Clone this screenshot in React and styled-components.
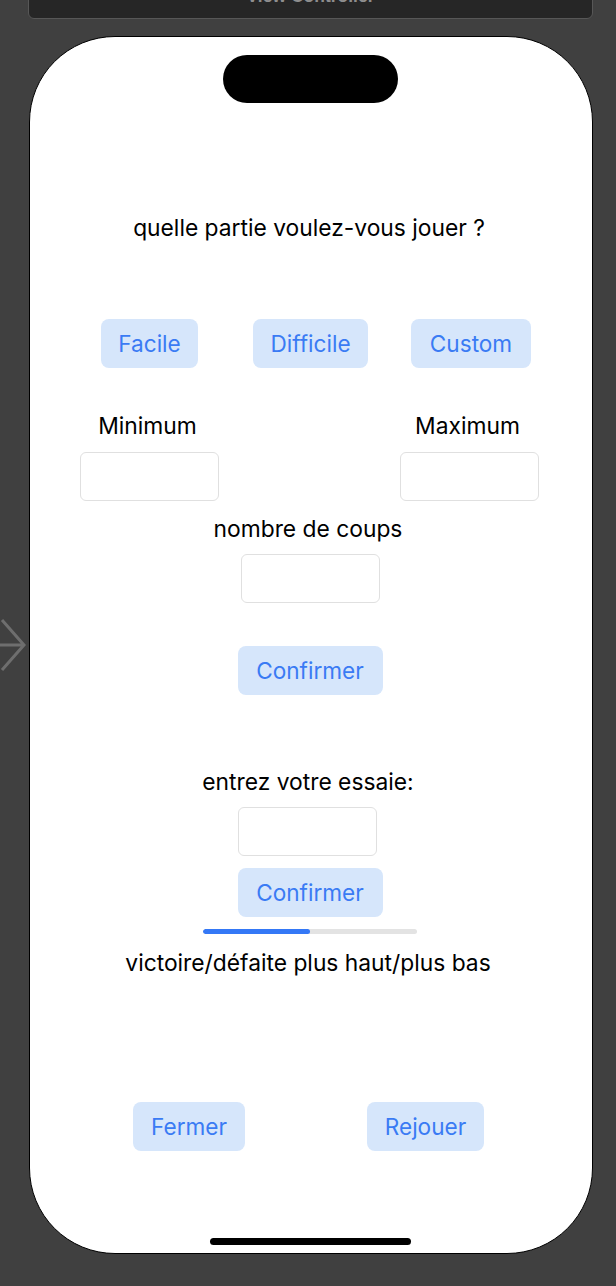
import React from 'react'
import styled, { createGlobalStyle } from 'styled-components'

const GlobalStyle = createGlobalStyle`
    html, body {
        margin: 0;
        padding: 0;
        background-color: #404040;
    }
    body {
        font-family: "Inter", "Liberation Sans", sans-serif;
    }
`

const App = () => {
    return <Canvas>
        <GlobalStyle/>
        <SceneBar>View Controller</SceneBar>
        <Stage>
            <EntryArrow width="29" height="56" viewBox="0 0 29 56">
                <path d="M-2 28 H24 M2 3 L24 28 L2 53" fill="none" stroke="#6e6e6e" strokeWidth="3"/>
            </EntryArrow>
            <Phone>
                <Island/>
                <Title>quelle partie voulez-vous jouer ?</Title>
                <ModeRow>
                    <PillButton width={97}>Facile</PillButton>
                    <PillButton width={115}>Difficile</PillButton>
                    <PillButton width={120}>Custom</PillButton>
                </ModeRow>
                <RangeRow>
                    <Field>
                        <Label>Minimum</Label>
                        <TextBox/>
                    </Field>
                    <Field>
                        <Label>Maximum</Label>
                        <TextBox/>
                    </Field>
                </RangeRow>
                <Label top={16}>nombre de coups</Label>
                <TextBox top={13}/>
                <PillButton width={145} top={43}>Confirmer</PillButton>
                <Label top={75}>entrez votre essaie:</Label>
                <TextBox top={13} shift={-3}/>
                <PillButton width={145} top={12}>Confirmer</PillButton>
                <Progress>
                    <ProgressFill style={{ width: '50%' }}/>
                </Progress>
                <Label top={17}>victoire/défaite plus haut/plus bas</Label>
                <BottomRow>
                    <PillButton width={112}>Fermer</PillButton>
                    <PillButton width={117}>Rejouer</PillButton>
                </BottomRow>
                <HomeBar/>
            </Phone>
        </Stage>
    </Canvas>
}

export default App

const Canvas = styled.div`
    width: 616px;
    height: 1286px;
    overflow: hidden;
    background-color: #404040;
`

const SceneBar = styled.div`
    margin: -21px 23px 0 28px;
    height: 40px;
    box-sizing: border-box;
    padding-top: 7px;
    background-color: #262626;
    border: 1px solid #575757;
    border-radius: 6px;
    color: #8e8e8e;
    font-family: "Liberation Sans", sans-serif;
    font-weight: bold;
    font-size: 17.5px;
    line-height: 18px;
    text-align: center;
`

const Stage = styled.div`
    display: flex;
    align-items: center;
    margin-top: 17px;
`

const EntryArrow = styled.svg`
    flex: 0 0 29px;
    display: block;
`

const Phone = styled.div`
    width: 564px;
    height: 1218px;
    box-sizing: border-box;
    padding-right: 2px;
    border: 1.5px solid #000;
    border-radius: 86px;
    background-color: #fff;
    display: flex;
    flex-direction: column;
    align-items: center;
    color: #000;
`

const Island = styled.div`
    margin-top: 18px;
    width: 175px;
    height: 48px;
    border-radius: 24px;
    background-color: #000;
    flex-shrink: 0;
`

const Title = styled.div`
    margin-top: 113px;
    font-size: 22.8px;
    line-height: 24px;
    white-space: nowrap;
    margin-left: -2px;
`

const ModeRow = styled.div`
    margin-top: 79px;
    align-self: stretch;
    display: flex;
    padding-left: 71px;
    gap: 55px;

    & > :last-child {
        margin-left: -12px;
    }
`

const PillButton = styled.div`
    width: ${p => p.width}px;
    height: 49px;
    margin-top: ${p => p.top || 0}px;
    flex-shrink: 0;
    box-sizing: border-box;
    border-radius: 8px;
    background-color: #d6e6fb;
    color: #3a7bf4;
    font-size: 22.6px;
    display: flex;
    align-items: center;
    justify-content: center;
`

const RangeRow = styled.div`
    margin-top: 46px;
    align-self: stretch;
    display: flex;
    justify-content: space-between;
    padding: 0 51px 0 50px;
`

const Field = styled.div`
    display: flex;
    flex-direction: column;
    align-items: center;
    gap: 14px;
`

const Label = styled.div`
    margin-top: ${p => p.top || 0}px;
    font-size: 22.8px;
    line-height: 24px;
    white-space: nowrap;
    margin-left: -4px;
`

const TextBox = styled.div`
    margin-top: ${p => p.top || 0}px;
    margin-left: ${p => (p.shift || 0) * 2}px;
    width: 139px;
    height: 49px;
    box-sizing: border-box;
    border: 1px solid #e0e0e0;
    border-radius: 6px;
    background-color: #fff;
    flex-shrink: 0;
`

const Progress = styled.div`
    margin-top: 12px;
    width: 214px;
    height: 5px;
    border-radius: 3px;
    background-color: #e3e3e3;
    overflow: hidden;
    flex-shrink: 0;
`

const ProgressFill = styled.div`
    height: 100%;
    border-radius: 3px;
    background-color: #3478f6;
`

const BottomRow = styled.div`
    margin-top: 127px;
    align-self: stretch;
    display: flex;
    padding-left: 103px;
    gap: 122px;
`

const HomeBar = styled.div`
    margin-top: 87px;
    width: 201px;
    height: 7px;
    border-radius: 4px;
    background-color: #000;
    flex-shrink: 0;
`
